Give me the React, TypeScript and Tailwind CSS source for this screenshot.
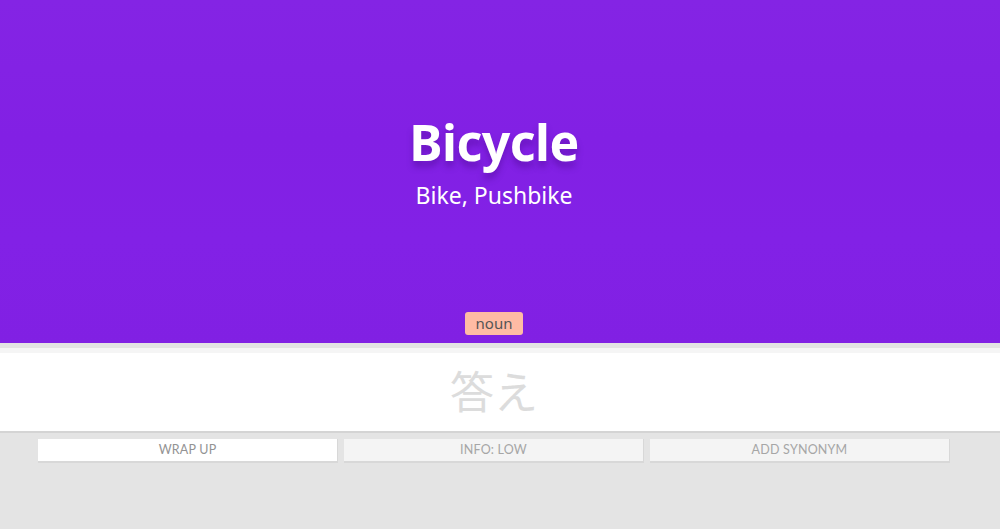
export default function App() {
  return (
    <div className="w-[1000px] h-[529px] bg-[#e4e4e4] flex flex-col overflow-hidden font-['Noto_Sans',sans-serif]">
      <div className="h-[343px] pr-[12px] bg-[linear-gradient(#8424e4,#8220e4_40%,#8221e6_70%,#8120e3)] flex flex-col items-center">
        <div className="mt-[110px] text-[50px] leading-[64px] font-bold text-white [text-shadow:0_6px_6px_rgba(60,0,120,0.35)] tracking-[-0.5px]">
          Bicycle
        </div>
        <div className="mt-[6px] text-[23px] leading-[30px] text-white">Bike, Pushbike</div>
        <div className="mt-auto mb-[8px] px-[11px] h-[23px] leading-[23px] rounded-[3px] bg-[#ffbba4] text-[#555] text-[15px]">
          noun
        </div>
      </div>
      <div className="h-[5px] bg-[#e3e3e3]" />
      <div className="h-[5px] bg-[#f5f5f5]" />
      <div className="h-[80px] pr-[12px] bg-white flex items-center justify-center border-b-2 border-[#d4d4d4]">
        <span className="text-[44px] text-[#dcdcdc] leading-none mt-[-4px] font-['Noto_Sans_CJK_JP',sans-serif]">答え</span>
      </div>
      <div className="flex gap-[6px] pl-[38px] pt-[6px] font-['Lato',sans-serif] text-[12.5px] tracking-[0.2px]">
        <div className="w-[300px] h-[24px] pt-[1px] bg-white border-b-2 border-r border-[#d8d8d8] flex items-center justify-center text-[#939393]">WRAP UP</div>
        <div className="w-[300px] h-[24px] pt-[1px] bg-[#f4f4f4] border-b-2 border-r border-[#d8d8d8] flex items-center justify-center text-[#a6a6a6]">INFO: LOW</div>
        <div className="w-[300px] h-[24px] pt-[1px] bg-[#f4f4f4] border-b-2 border-r border-[#d8d8d8] flex items-center justify-center text-[#a6a6a6]">ADD SYNONYM</div>
      </div>
    </div>
  );
}
